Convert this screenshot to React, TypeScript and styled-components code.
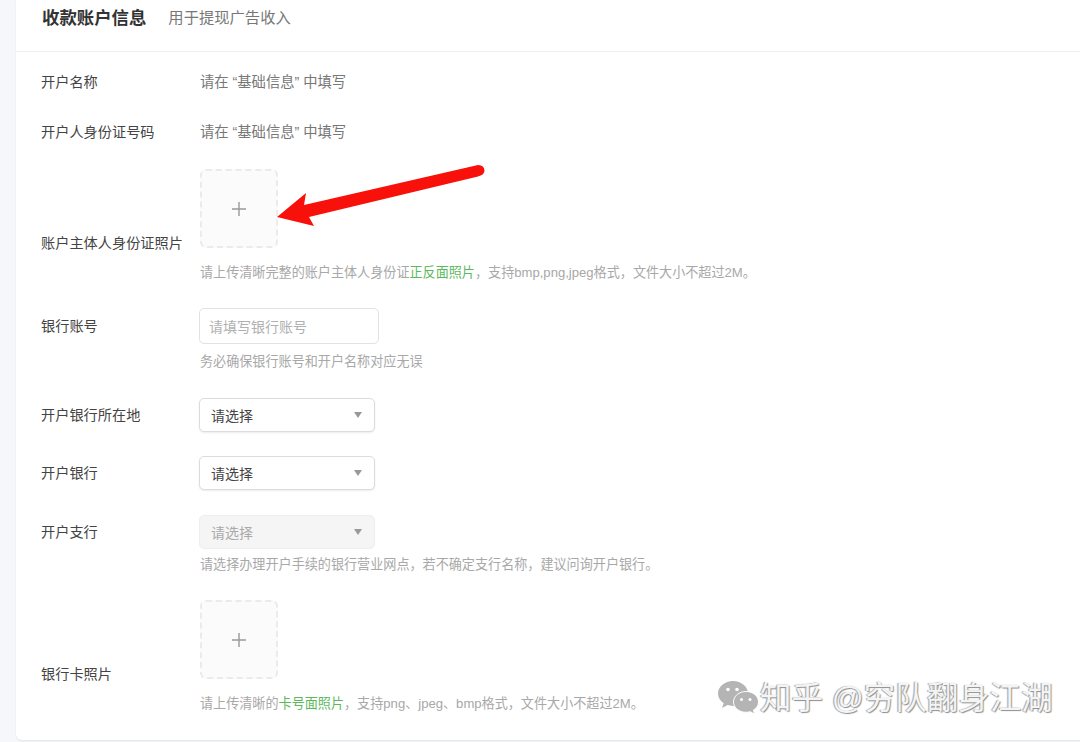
import styled, { createGlobalStyle } from 'styled-components'

const GlobalStyle = createGlobalStyle`
  html, body {
    margin: 0;
    padding: 0;
    background: #f5f7fa;
    font-family: "Liberation Sans", "Noto Sans CJK SC", sans-serif;
  }
`

const Page = styled.div`
  position: relative;
  width: 1080px;
  height: 742px;
  overflow: hidden;
  padding-left: 16px;
  box-sizing: border-box;
`

const Card = styled.div`
  height: 740px;
  margin-right: -8px;
  background: #fff;
  border-radius: 0 0 6px 6px;
  box-shadow: 0 1px 2px rgba(0, 0, 0, 0.08);
`

const Header = styled.div`
  display: flex;
  align-items: center;
  gap: 22px;
  height: 52px;
  padding: 0 0 19px 26px;
  box-sizing: border-box;
  border-bottom: 1px solid #f0f0f0;
`

const Title = styled.span`
  font-size: 17.4px;
  font-weight: 700;
  color: #333;
`

const Subtitle = styled.span`
  font-size: 15.3px;
  color: #777;
`

const Form = styled.div`
  display: flex;
  flex-direction: column;
  padding-left: 25px;
`

const Row = styled.div<{ $top: number; $end?: boolean }>`
  display: flex;
  align-items: ${p => (p.$end ? 'flex-end' : 'center')};
  margin-top: ${p => p.$top}px;
`

const Label = styled.div<{ $drop?: number }>`
  width: 158px;
  flex: none;
  font-size: 14.2px;
  line-height: 20px;
  color: #444;
  margin-bottom: ${p => -(p.$drop ?? 0)}px;
`

const Value = styled.div`
  font-size: 14.3px;
  line-height: 20px;
  color: #777;
  padding-left: 1px;
`

const UploadBox = styled.div`
  width: 78px;
  height: 79px;
  margin-left: 1px;
  box-sizing: border-box;
  display: flex;
  align-items: center;
  justify-content: center;
  background: #fbfbfb;
  border: 2px dashed #ebebeb;
  border-radius: 6px;
`

const Hint = styled.div<{ $top: number }>`
  margin: ${p => p.$top}px 0 0 158px;
  padding-left: 1px;
  font-size: 13.1px;
  line-height: 18px;
  color: #a8a8a8;
  white-space: nowrap;
`

const Green = styled.span`
  color: #5cb85c;
`

const TextInput = styled.div`
  width: 180px;
  height: 36px;
  box-sizing: border-box;
  display: flex;
  align-items: center;
  padding-left: 9px;
  font-size: 14px;
  color: #b0b0b0;
  background: #fff;
  border: 1px solid #e2e2e2;
  border-radius: 5px;
`

const Select = styled.div<{ $disabled?: boolean }>`
  width: 176px;
  height: 34px;
  box-sizing: border-box;
  display: flex;
  align-items: center;
  justify-content: space-between;
  padding: 0 12px 1px 11px;
  font-size: 14px;
  color: ${p => (p.$disabled ? '#aaa' : '#444')};
  background: ${p => (p.$disabled ? '#f5f5f5' : '#fff')};
  border: 1px solid ${p => (p.$disabled ? '#eee' : '#dcdcdc')};
  border-radius: 5px;
  box-shadow: ${p => (p.$disabled ? 'none' : '0 1px 2px rgba(0, 0, 0, 0.08)')};
`

const Caret = styled.span`
  width: 0;
  height: 0;
  border-left: 4.5px solid transparent;
  border-right: 4.5px solid transparent;
  border-top: 6px solid #999;
`

const Arrow = styled.svg`
  position: absolute;
  left: 270px;
  top: 160px;
`

const Watermark = styled.div`
  position: absolute;
  left: 717px;
  top: 678px;
  display: flex;
  align-items: center;
  gap: 1px;
  font-size: 31.5px;
  line-height: 40px;
  color: #f4f4f4;
  text-shadow: 1px 1px 1px #8e8e8e, -1px 0 1px #9c9c9c;
  white-space: nowrap;
`

function Plus() {
  return (
    <svg width="14" height="14" viewBox="0 0 14 14">
      <path d="M7 0v14M0 7h14" stroke="#999" strokeWidth="1.4" />
    </svg>
  )
}

function WechatLogo() {
  return (
    <svg width="42" height="36" viewBox="0 0 42 36">
      <path d="M16 1C7.7 1 1 6.6 1 13.5c0 4 2.2 7.4 5.7 9.7L5 28l5.6-2.9c1.7.5 3.5.8 5.4.8 8.3 0 15-5.6 15-12.4S24.3 1 16 1z" fill="#b4b4b4" />
      <path d="M29 11.5c-7 0-12.500 4.700-12.500 10.400S22 32.300 29 32.300c1.500 0 2.900-.2 4.200-.6l4.500 2.400-1.300-4c3.300-1.900 5.100-4.900 5.100-8.200 0-5.700-5.500-10.400-12.500-10.400z" fill="#b4b4b4" stroke="#fff" strokeWidth="1" />
      <circle cx="11" cy="9.5" r="1.8" fill="#fff" />
      <circle cx="20" cy="9.5" r="1.8" fill="#fff" />
      <circle cx="24.5" cy="19.5" r="1.5" fill="#fff" />
      <circle cx="33" cy="19.5" r="1.5" fill="#fff" />
    </svg>
  )
}

export default function App() {
  return (
    <Page>
      <GlobalStyle />
      <Card>
        <Header>
          <Title>收款账户信息</Title>
          <Subtitle>用于提现广告收入</Subtitle>
        </Header>
        <Form>
          <Row $top={20}>
            <Label>开户名称</Label>
            <Value>请在 “基础信息” 中填写</Value>
          </Row>
          <Row $top={30}>
            <Label>开户人身份证号码</Label>
            <Value>请在 “基础信息” 中填写</Value>
          </Row>
          <Row $top={27} $end>
            <Label $drop={5}>账户主体人身份证照片</Label>
            <UploadBox><Plus /></UploadBox>
          </Row>
          <Hint $top={16}>
            请上传清晰完整的账户主体人身份证<Green>正反面照片</Green>，支持bmp,png,jpeg格式，文件大小不超过2M。
          </Hint>
          <Row $top={26}>
            <Label>银行账号</Label>
            <TextInput>请填写银行账号</TextInput>
          </Row>
          <Hint $top={9}>务必确保银行账号和开户名称对应无误</Hint>
          <Row $top={27}>
            <Label>开户银行所在地</Label>
            <Select>请选择<Caret /></Select>
          </Row>
          <Row $top={24}>
            <Label>开户银行</Label>
            <Select>请选择<Caret /></Select>
          </Row>
          <Row $top={25}>
            <Label>开户支行</Label>
            <Select $disabled>请选择<Caret /></Select>
          </Row>
          <Hint $top={7}>请选择办理开户手续的银行营业网点，若不确定支行名称，建议问询开户银行。</Hint>
          <Row $top={26} $end>
            <Label $drop={5}>银行卡照片</Label>
            <UploadBox><Plus /></UploadBox>
          </Row>
          <Hint $top={16}>
            请上传清晰的<Green>卡号面照片</Green>，支持png、jpeg、bmp格式，文件大小不超过2M。
          </Hint>
        </Form>
      </Card>
      <Arrow width="220" height="72" viewBox="270 160 220 72">
        <path d="M277 217 L306 193 L304 205 L478 165 Q484.500 165 484.500 171 Q484 175 478 176.500 L309 217 L314 226 Z" fill="#f8100a" />
      </Arrow>
      <Watermark>
        <WechatLogo />
        <span>知乎 @穷队翻身江湖</span>
      </Watermark>
    </Page>
  )
}
